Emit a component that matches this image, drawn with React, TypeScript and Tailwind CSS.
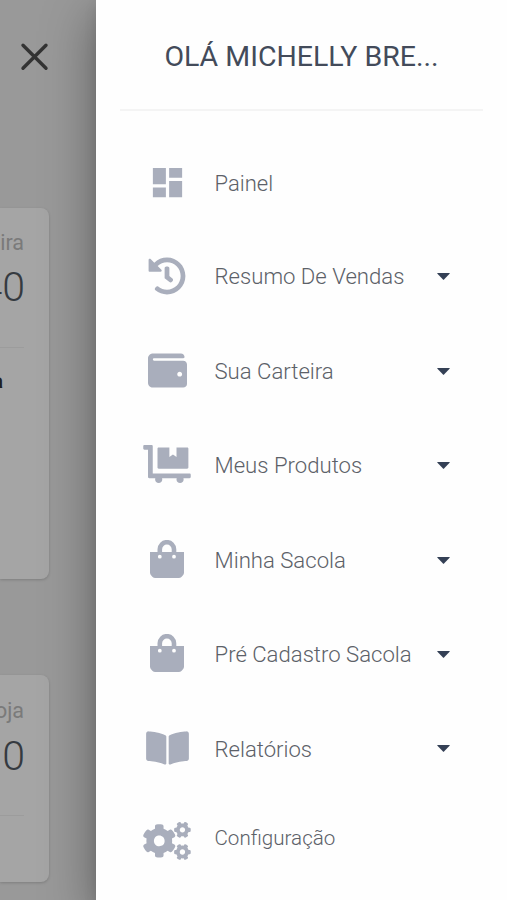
import type { ComponentType } from "react";
import { FaBookOpen, FaCogs, FaDollyFlatbed, FaHistory, FaWallet } from "react-icons/fa";
import { MdDashboard } from "react-icons/md";

type IconProps = { className?: string };
type Item = { label: string; icon: ComponentType<IconProps>; size: string; caret: boolean; row: string; text: string; offset: string };

function Bag({ className }: IconProps) {
  return (
    <svg viewBox="0 0 34 38" className={className}>
      <path d="M9.8 13V9.300a7.100 7.100 0 0 1 14.200 0V13" fill="none" stroke="currentColor" strokeWidth="4.6" />
      <path
        fill="currentColor"
        fillRule="evenodd"
        d="M0 12h34v20.500q0 1.700-1 2.700l-1.600 1.700Q30.400 38 28.800 38H5.200Q3.600 38 2.600 36.900L1 35.200q-1-1-1-2.700zM9.800 14.800a1.900 1.900 0 1 0 0 3.800 1.900 1.900 0 0 0 0-3.800zM24 14.800a1.900 1.900 0 1 0 0 3.800 1.900 1.900 0 0 0 0-3.800z"
      />
    </svg>
  );
}

const items: Item[] = [
  { label: "Painel", icon: MdDashboard, size: "w-[39px] h-[39px]", caret: false, row: "h-[94px]", text: "pt-[2px] text-[22px]", offset: "pb-[1px]" },
  { label: "Resumo De Vendas", icon: FaHistory, size: "w-[38px] h-[38px]", caret: true, row: "h-[94px]", text: "pb-[2px] text-[22.15px]", offset: "pb-[3px]" },
  { label: "Sua Carteira", icon: FaWallet, size: "w-[39px] h-[39px]", caret: true, row: "h-[95px]", text: "pb-[2px] text-[22.15px]", offset: "pb-[3px]" },
  { label: "Meus Produtos", icon: FaDollyFlatbed, size: "w-[48px] h-[38px]", caret: true, row: "h-[94px]", text: "pb-[2px] text-[22.15px]", offset: "pb-[4px]" },
  { label: "Minha Sacola", icon: Bag, size: "w-[34px] h-[38px]", caret: true, row: "h-[95px]", text: "pb-[2px] text-[22.15px]", offset: "pb-[3px]" },
  { label: "Pré Cadastro Sacola", icon: Bag, size: "w-[34px] h-[38px]", caret: true, row: "h-[93px]", text: "pb-[2px] text-[22.15px]", offset: "pb-[3px]" },
  { label: "Relatórios", icon: FaBookOpen, size: "w-[43px] h-[38px]", caret: true, row: "h-[96px]", text: "text-[22.1px]", offset: "pb-[3px]" },
  { label: "Configuração", icon: FaCogs, size: "w-[48px] h-[38px]", caret: false, row: "h-[82px]", text: "text-[20.6px]", offset: "pt-[5px]" },
];

function MenuRow({ item }: { item: Item }) {
  const Icon = item.icon;
  return (
    <a className={`flex shrink-0 items-center ${item.row}`}>
      <span className={`flex w-[94px] shrink-0 justify-center ${item.offset}`}>
        <Icon className={`${item.size} text-[#a9aebc]`} />
      </span>
      <span className={`w-[223px] whitespace-nowrap pl-[0.5px] font-light leading-[28px] text-[#5c6168] ${item.text}`}>
        {item.label}
      </span>
      {item.caret && (
        <svg viewBox="0 0 13 7" className="mb-[1px] h-[7px] w-[13px] fill-[#344055]">
          <path d="M.5 0h12l.3.6L6.5 7 .2.6z" />
        </svg>
      )}
    </a>
  );
}

export default function App() {
  return (
    <div className="flex h-[900px] w-[507px] overflow-hidden bg-[#999999] font-['Roboto',sans-serif]">
      <div className="flex w-[96px] shrink-0 flex-col">
        <button className="ml-[20px] mt-[42px] h-[30px] w-[29px]">
          <svg viewBox="0 0 29 30" className="h-[30px] w-[29px] stroke-[#333333]" strokeWidth="3.4" strokeLinecap="round">
            <path d="M3 3.2 26 26.2M26 3.2 3 26.2" />
          </svg>
        </button>
        <section className="mt-[136px] flex h-[371px] w-[49px] flex-col items-end rounded-r-[8px] bg-[#a5a5a5] pr-[25px] shadow-[0_1px_3px_rgba(0,0,0,0.18)]">
          <p className="mt-[21px] whitespace-nowrap text-[21.5px] leading-[28px] text-[#7a7a7a]">Carteira</p>
          <p className="-mr-px mt-[6px] whitespace-nowrap text-[41px] font-light leading-[48px] text-[#353a40]">40</p>
          <hr className="mt-[36px] w-[24px] border-t border-[#9c9c9c]" />
          <p className="mr-[21px] mt-[19px] whitespace-nowrap text-[20px] font-bold leading-[28px] text-[#202020]">a</p>
        </section>
        <section className="mt-[96px] flex h-[207px] w-[49px] flex-col items-end rounded-r-[8px] bg-[#a5a5a5] pr-[25px] shadow-[0_1px_3px_rgba(0,0,0,0.18)]">
          <p className="mt-[22px] whitespace-nowrap text-[21.5px] leading-[28px] text-[#7a7a7a]">Loja</p>
          <p className="-mr-px mt-[7px] whitespace-nowrap text-[41px] font-light leading-[48px] text-[#353a40]">0</p>
          <hr className="mt-[35px] w-[24px] border-t border-[#9c9c9c]" />
        </section>
      </div>
      <aside className="relative flex w-[411px] shrink-0 flex-col bg-[#fefefe] px-[24px] shadow-[0_16px_48px_2px_rgba(0,0,0,0.36),0_6px_12px_rgba(0,0,0,0.1)]">
        <h1 className="flex h-[111px] w-[363px] shrink-0 justify-center border-b-2 border-[#f4f4f4] pt-[39px] text-[28.5px] leading-[36px] text-[#434b5a]">
          OLÁ MICHELLY BRE...
        </h1>
        <nav className="mt-[25px] flex flex-col">
          {items.map((item) => (
            <MenuRow key={item.label} item={item} />
          ))}
        </nav>
      </aside>
    </div>
  );
}
